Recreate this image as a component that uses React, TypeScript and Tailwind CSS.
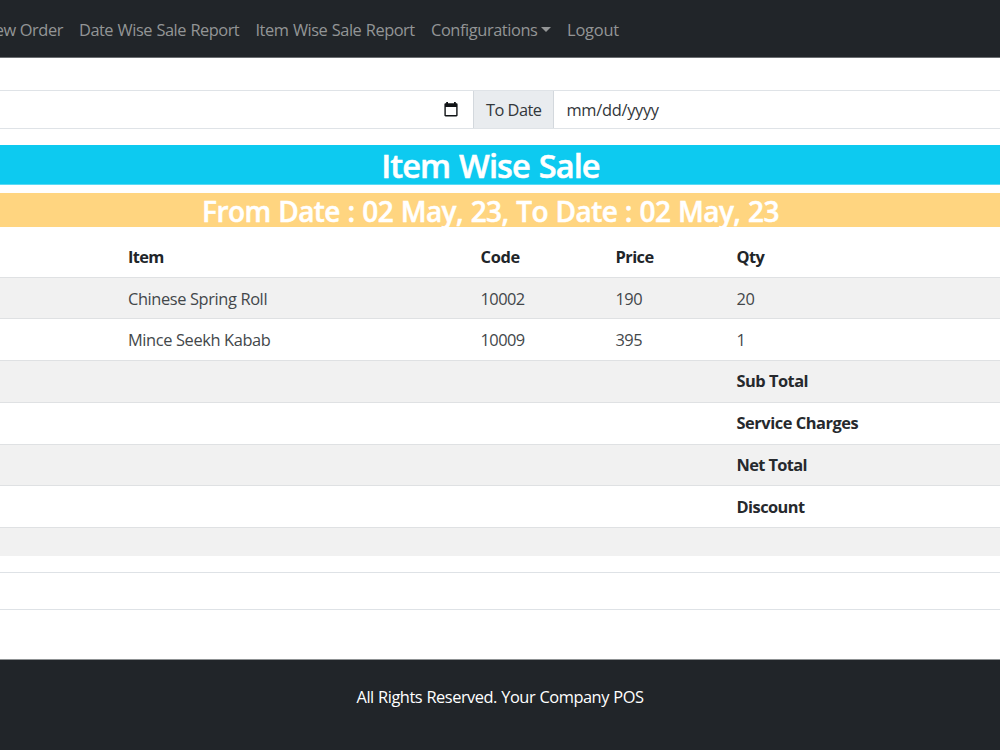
const navLinks = [
  { label: 'Date Wise Sale Report', className: 'w-[160.5px] tracking-[-0.5px] [word-spacing:0.8px]' },
  { label: 'Item Wise Sale Report', className: 'w-[159.5px] tracking-[-0.49px] [word-spacing:0.8px]' },
  { label: 'Configurations', className: 'w-[120px] tracking-[-0.42px]', caret: true },
  { label: 'Logout', className: 'w-[52px] tracking-[-0.18px]' },
];

const items = [
  { name: 'Chinese Spring Roll', code: '10002', price: '190', qty: '20', className: 'pt-px' },
  { name: 'Mince Seekh Kabab', code: '10009', price: '395', qty: '1', className: '' },
];

const totals = [
  { label: 'Sub Total', className: 'pb-px tracking-[-0.5px]' },
  { label: 'Service Charges', className: 'pb-px tracking-[-0.45px]' },
  { label: 'Net Total', className: 'tracking-[-0.62px]' },
  { label: 'Discount', className: 'tracking-[-0.55px]' },
];

const columns = 'grid grid-cols-[352.5px_135px_121px_1fr] items-center pl-32';

function CalendarIcon() {
  return (
    <svg width="14" height="15" viewBox="0 0 14 15" aria-hidden="true">
      <path
        fill="#111417"
        fillRule="evenodd"
        d="M2.2 0h1.8v1.2h6V0h1.8v1.2h.6c.7 0 1.2.5 1.2 1.2v10.9c0 .7-.5 1.2-1.2 1.2H1.6c-.7 0-1.2-.5-1.2-1.2V2.4c0-.7.5-1.2 1.2-1.2h.6V0ZM1.8 5v8.1h10.4V5H1.8Z"
      />
    </svg>
  );
}

function Navbar() {
  return (
    <nav className="flex h-[58px] items-center gap-4 border-b border-[#6b6e71] bg-[#212529] pt-[2px] text-[#939596]">
      <div className="flex w-[63px] shrink-0 justify-end tracking-[-0.42px] whitespace-nowrap">
        <a>ew Order</a>
      </div>
      {navLinks.map((link) => (
        <a key={link.label} className={`flex shrink-0 items-center whitespace-nowrap ${link.className}`}>
          {link.label}
          {link.caret && (
            <span className="mb-px ml-auto border-x-[5px] border-t-[5px] border-x-transparent border-t-[#939596]" />
          )}
        </a>
      ))}
    </nav>
  );
}

function DateFilter() {
  return (
    <div className="mt-8 flex h-[39px] border-y border-[#dfe3e7] text-[#212529]">
      <div className="flex w-[473px] items-center justify-end pr-[15px] pb-px">
        <CalendarIcon />
      </div>
      <div className="flex w-[81px] items-center border-x border-[#d3d8dd] bg-[#e9ecef] pb-px pl-3 tracking-[-0.52px] whitespace-nowrap text-[#33373b]">
        To Date
      </div>
      <div className="flex flex-1 items-center pb-px pl-[12.5px] tracking-[-0.3px] text-[#33373b]">mm/dd/yyyy</div>
    </div>
  );
}

function SalesTable() {
  return (
    <div>
      <div className={`${columns} h-[49.5px] pt-[10px] font-bold tracking-[-0.55px] text-[#212529]`}>
        <span className="tracking-[-0.7px]">Item</span>
        <span className="tracking-[-0.3px]">Code</span>
        <span>Price</span>
        <span>Qty</span>
      </div>
      {items.map((item) => (
        <div
          key={item.code}
          className={`${columns} h-[41.75px] border-t border-[#dfe1e3] tracking-[-0.38px] text-[#43474a] odd:bg-white even:bg-[#f1f1f1] ${item.className}`}
        >
          <span>{item.name}</span>
          <span className="tracking-[-0.55px]">{item.code}</span>
          <span className="tracking-[-0.5px]">{item.price}</span>
          <span>{item.qty}</span>
        </div>
      ))}
      {totals.map((row) => (
        <div
          key={row.label}
          className={`${columns} h-[41.75px] border-t border-[#dfe1e3] font-bold text-[#26292d] odd:bg-white even:bg-[#f1f1f1] ${row.className}`}
        >
          <span className="col-start-4">{row.label}</span>
        </div>
      ))}
      <div className="h-[28.5px] border-t border-[#dfe1e3] bg-[#f1f1f1]" />
    </div>
  );
}

export default function App() {
  return (
    <div className="flex h-[750px] w-[1000px] flex-col overflow-hidden bg-white font-['Open_Sans',sans-serif] text-[16.4px] leading-[25px]">
      <Navbar />
      <main>
        <DateFilter />
        <h1 className="mt-4 h-[40px] border-b border-[#5bdaf4] bg-[#0dcaf0] pr-[19px] text-center text-[32.6px] leading-[42px] font-semibold tracking-[-0.94px] text-white [-webkit-text-stroke:0.5px_white] [word-spacing:1.4px]">
          Item Wise Sale
        </h1>
        <h2 className="mt-2 h-[34px] bg-[#ffd580] pr-[19px] text-center text-[28px] leading-[37px] font-semibold tracking-[-0.57px] whitespace-nowrap text-white [-webkit-text-stroke:0.5px_white] [word-spacing:0.9px]">
          From Date : 02 May, 23, To Date : 02 May, 23
        </h2>
        <SalesTable />
        <div className="mt-[16.5px] h-[38px] border-y border-[#dee2e6]" />
      </main>
      <footer className="mt-auto flex h-[91px] justify-center border-t border-[#8f9294] bg-[#212529] pt-6 tracking-[-0.48px] text-white [word-spacing:0.6px]">
        <p>All Rights Reserved. Your Company POS</p>
      </footer>
    </div>
  );
}
